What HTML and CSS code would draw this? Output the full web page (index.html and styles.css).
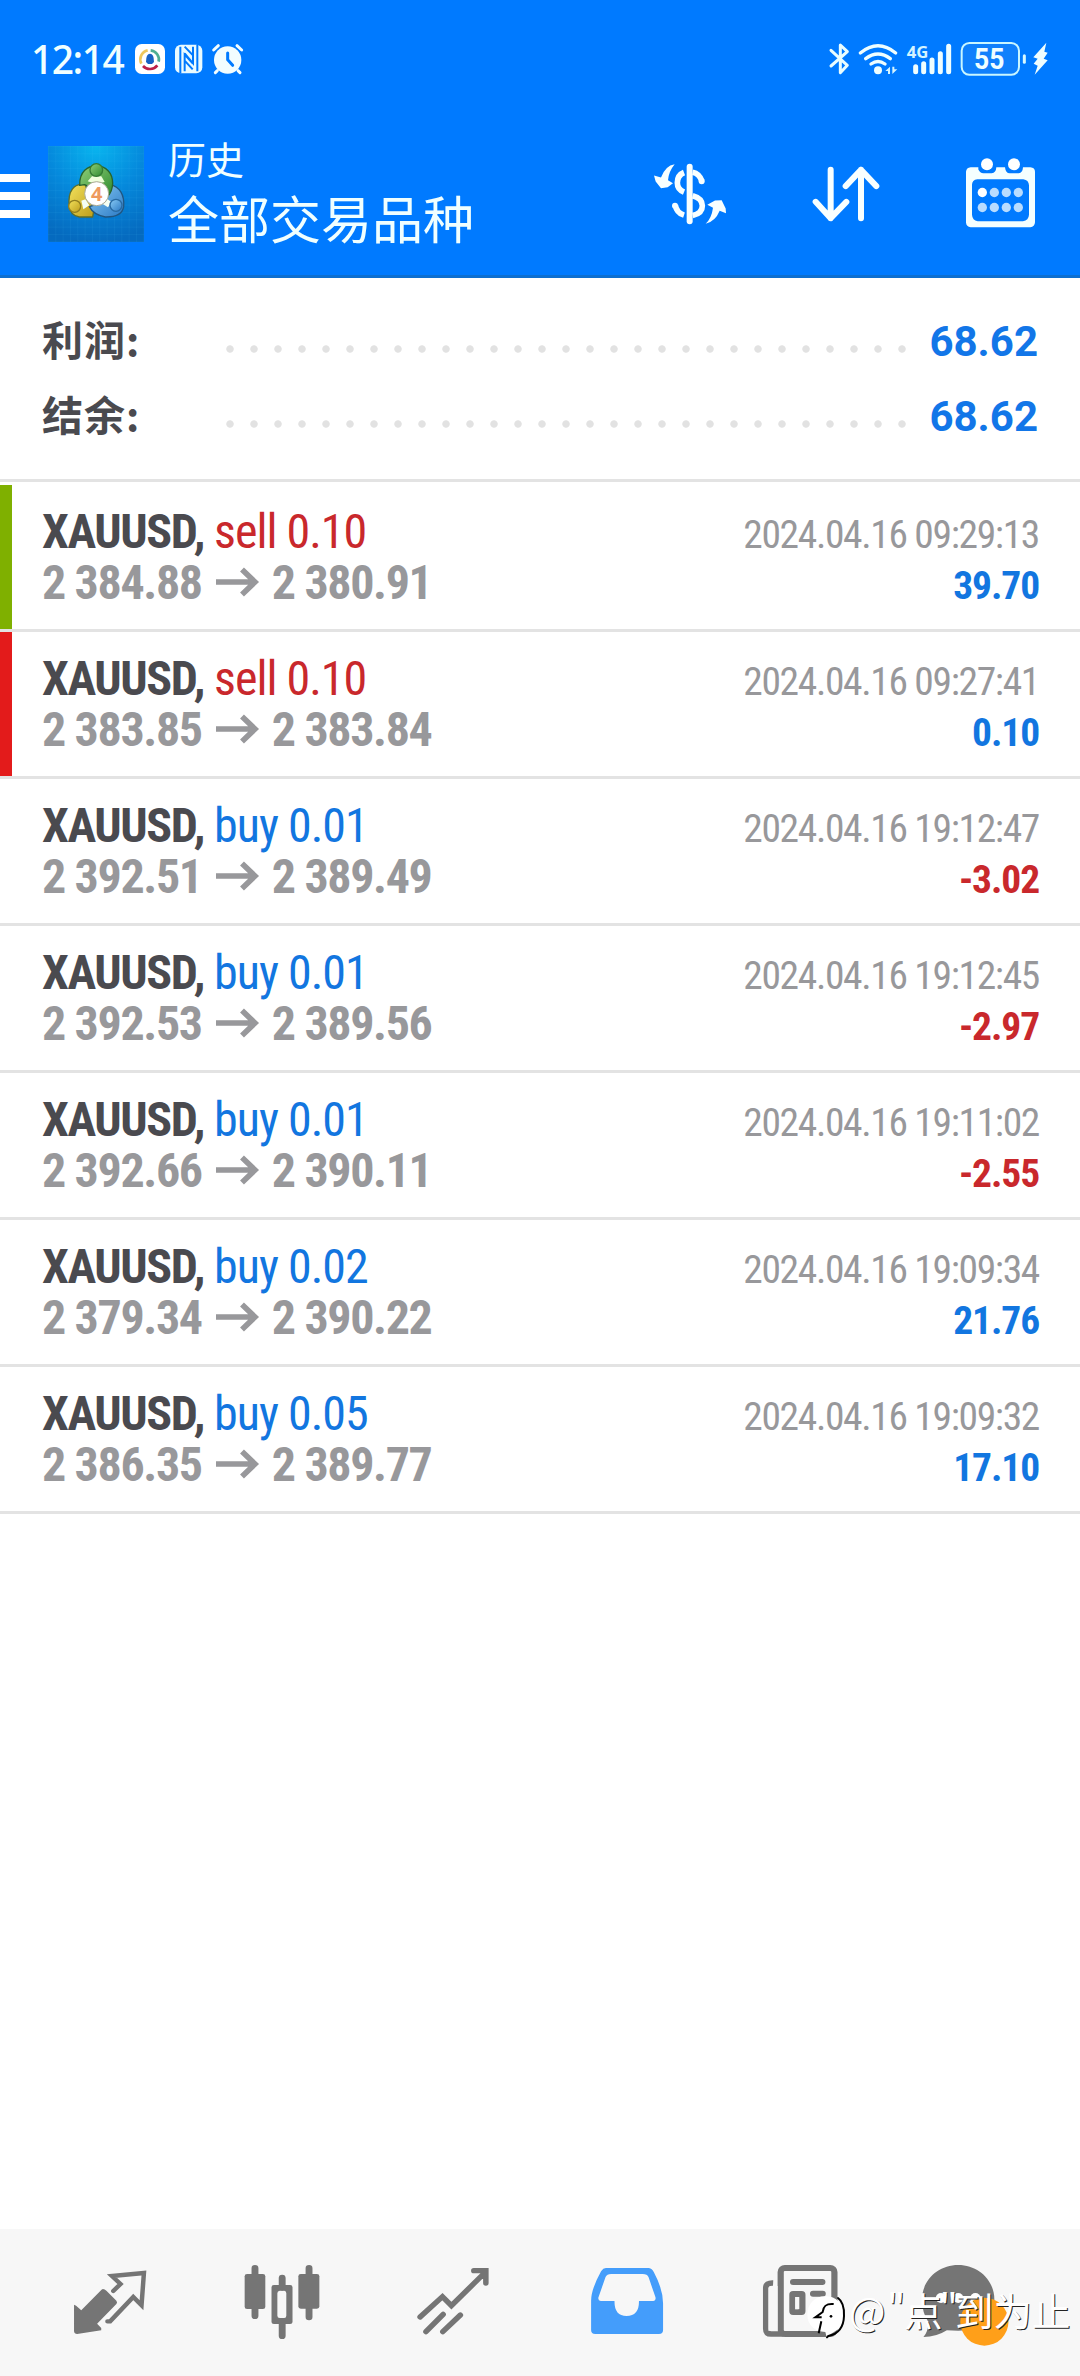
FILE: index.html
```html
<!DOCTYPE html>
<html lang="zh-CN">
<head>
<meta charset="utf-8">
<title>历史</title>
<link rel="stylesheet" href="styles.css">
</head>
<body>
<div class="screen">
  <header class="header">
    <div class="status">
      <div class="status-left">
        <span class="clock">12:14</span>
        <svg class="status-icons-left" viewBox="396 60 339 120">
          <rect x="405" y="72" width="90" height="90" rx="20" fill="#fff"/>
          <g fill="none" stroke-width="8">
            <path d="M424 131A28 28 0 0 1 443 91" stroke="#efc75b"/>
            <path d="M452 91A28 28 0 0 1 476 125" stroke="#4fae92"/>
            <path d="M429 138A28 28 0 0 0 472 136" stroke="#bd2048"/>
          </g>
          <path d="M438 126Q438 101 450 101T462 126L456 132H444Z" fill="#1761c4"/>
          <rect x="525" y="74" width="82" height="86" rx="18" fill="#e9fbff"/>
          <g fill="none" stroke="#007aff" stroke-width="6">
            <path d="M541 80V160M592 74V154M554 154V104L578 130M579 80V130L554 100M554 122L578 148M554 80L579 106"/>
          </g>
          <circle cx="683" cy="120" r="41" fill="#f2fdff"/>
          <path d="M652 152L646 158M714 152L720 158M641 90L655 77M711 77L725 90" stroke="#f2fdff" stroke-width="9" stroke-linecap="round"/>
          <path d="M683 99V119L698 136" fill="none" stroke="#007aff" stroke-width="9" stroke-linecap="round"/>
        </svg>
      </div>
      <svg class="status-icons-right" viewBox="84 60 666 120">
        <path d="M93 91L142 136L121 158V75L142 95L93 138" fill="none" stroke="#e9fdff" stroke-width="9" stroke-linecap="round" stroke-linejoin="round"/>
        <g fill="none" stroke="#effeff" stroke-width="10" stroke-linecap="round">
          <path d="M181 99Q234 56 287 99M197 116Q234 88 271 116M213 132Q234 117 255 132"/>
        </g>
        <circle cx="234" cy="151" r="12" fill="#effeff"/>
        <path d="M256 153L270 140V162H264V153ZM292 148L277 162V140H283V148Z" fill="#d4f4ff"/>
        <text x="320" y="115" class="net" textLength="65" lengthAdjust="spacingAndGlyphs">4G</text>
        <path d="M347 140V155M371 131V155M396 120V155M421 101V155M446 79V155" stroke="#effeff" stroke-width="15" stroke-linecap="round"/>
        <rect x="485" y="69" width="172" height="95" rx="23" fill="#0f80fc" stroke="#c9f6ff" stroke-width="6"/>
        <text x="522" y="147" class="battery" textLength="91" lengthAdjust="spacingAndGlyphs">55</text>
        <path d="M673 107V127" stroke="#d9faff" stroke-width="9" stroke-linecap="round"/>
        <path d="M739 68L700 112L713 116L701 131L713 137L704 164L743 121L731 116L743 98L733 95Z" fill="#effeff"/>
      </svg>
    </div>
    <div class="appbar">
      <div class="menu"><i></i><i></i><i></i></div>
      <svg class="logo" viewBox="0 0 288 288">
        <defs>
          <radialGradient id="sky" cx=".5" cy="0" r="1"><stop offset="0" stop-color="#08b5ef"/><stop offset=".5" stop-color="#0589dc"/><stop offset="1" stop-color="#056abf"/></radialGradient>
          <linearGradient id="green" x2="1" y2="1"><stop stop-color="#8fcf78"/><stop offset="1" stop-color="#2e8a2e"/></linearGradient>
          <linearGradient id="gold" x2="1" y2="1"><stop stop-color="#f3e25c"/><stop offset="1" stop-color="#bd9d1c"/></linearGradient>
          <linearGradient id="blue" x2="1" y2="1"><stop stop-color="#8acbf5"/><stop offset="1" stop-color="#2a79c4"/></linearGradient>
          <pattern id="grid" width="22" height="22" patternUnits="userSpaceOnUse"><path d="M0 0H22M0 0V22" stroke="#5fd0ff" stroke-opacity=".18" stroke-width="2"/></pattern>
        </defs>
        <rect width="288" height="288" fill="url(#sky)"/>
        <rect width="288" height="288" fill="url(#grid)"/>
        <g stroke-width="4" stroke-linejoin="round">
          <path d="M64 180C58 136 78 110 112 116L138 190L134 213H94Q66 208 64 180Z" fill="url(#gold)" stroke="#5c6e2c"/>
          <path d="M186 116C216 122 230 148 227 182Q222 214 172 213Q136 206 124 182L176 166Z" fill="url(#blue)" stroke="#215681"/>
          <path d="M95 118C94 75 120 60 145 60C174 60 194 80 194 112Q193 136 180 150L110 116Z" fill="url(#green)" stroke="#28642d"/>
          <path d="M119 106L132 91H160L170 108L145 114Z" fill="#efffdc" stroke="none"/>
          <path d="M100 164L112 160L124 178L106 190ZM174 156L190 168L180 184L164 174Z" fill="#f5fff4" stroke="none"/>
          <circle cx="145" cy="72" r="19" fill="url(#green)" stroke="#357b34"/>
          <circle cx="80" cy="181" r="18" fill="url(#gold)" stroke="#8f7d20"/>
          <circle cx="204" cy="178" r="18" fill="url(#blue)" stroke="#286aa2"/>
        </g>
        <circle cx="146" cy="143" r="36" fill="#fff" stroke="#a9a993" stroke-width="3"/>
        <text x="146" y="165" class="logo-num" text-anchor="middle">4</text>
      </svg>
      <div class="titles">
        <div class="title-small">历史</div>
        <div class="title-main">全部交易品种</div>
      </div>
      <div class="actions">
        <svg viewBox="90 75 228 230">
          <path d="M209 110V273" stroke="#f8ffff" stroke-width="18" stroke-linecap="round"/>
          <path d="M192 127Q172 135 172 158Q172 178 192 186M218 126Q238 130 246 153M166 225Q170 248 192 255M218 197Q247 205 247 227Q247 250 218 256" fill="none" stroke="#f8ffff" stroke-width="17"/>
          <circle cx="245" cy="153" r="9" fill="#f8ffff"/><circle cx="165" cy="227" r="9" fill="#f8ffff"/>
          <path d="M164 102Q136 106 123 142L102 136L107 154L123 174L143 171L159 159L144 150Q146 124 164 102ZM257 281Q286 274 299 242L318 249L317 235L305 210L285 211L262 224L279 233Q275 264 257 281Z" fill="#f8ffff"/>
        </svg>
        <svg viewBox="558 75 228 230">
          <path d="M632 119V264M587 215L632 264L679 215M723 264V119M677 168L723 119L769 168" fill="none" stroke="#f8ffff" stroke-width="18" stroke-linecap="round" stroke-linejoin="round"/>
        </svg>
        <svg viewBox="1026 75 228 230">
          <path d="M1052 111H1075V118Q1080 129 1090 129H1115Q1128 128 1129 111H1155Q1157 129 1169 129H1196Q1208 128 1209 111H1231Q1245 112 1245 125V276Q1244 290 1231 291H1052Q1039 290 1038 277V125Q1039 112 1052 111ZM1072 147Q1056 149 1056 164V254Q1057 271 1073 273H1209Q1226 271 1227 254V165Q1226 149 1210 147Z" fill="#f4ffff" fill-rule="evenodd"/>
          <circle cx="1101" cy="102" r="18" fill="#fff"/><circle cx="1182" cy="102" r="18" fill="#fff"/>
          <circle cx="1087" cy="187" r="14" fill="#fff"/>
          <g fill="#b8dcff"><circle cx="1123" cy="187" r="14"/><circle cx="1159" cy="187" r="14"/><circle cx="1195" cy="187" r="14"/><circle cx="1087" cy="232" r="14"/><circle cx="1123" cy="232" r="14"/><circle cx="1159" cy="232" r="14"/><circle cx="1195" cy="232" r="14"/></g>
        </svg>
      </div>
    </div>
  </header>

  <section class="summary">
    <div class="sum-row"><span class="sum-label">利润:</span><span class="dots"></span><span class="sum-value">68.62</span></div>
    <div class="sum-row"><span class="sum-label">结余:</span><span class="dots"></span><span class="sum-value">68.62</span></div>
  </section>

  <main class="deals" id="deals"></main>

  <nav class="nav">
    <svg viewBox="69.7 87 501 441" preserveAspectRatio="none">
      <path d="M299 267Q304 267 309 272L338 302Q342 307 338 312L282 371L294 384V391L224 402Q216 402 215 394V314L221 317L236 331L292 272Q296 267 299 267Z" fill="#757575"/>
      <path d="M329 273L350 252L325 228L418 219L411 316L387 291L320 364H312" fill="none" stroke="#757575" stroke-width="13" stroke-linecap="round" stroke-linejoin="miter"/>
    </svg>
    <svg viewBox="570.6 87 501 441" preserveAspectRatio="none">
      <path d="M739 205V347M896 205V351M818 234V262M818 366V407" stroke="#757575" stroke-width="20" stroke-linecap="round"/>
      <rect x="709" y="222" width="60" height="105" rx="7" fill="#757575"/>
      <rect x="865" y="222" width="61" height="104" rx="7" fill="#757575"/>
      <path d="M794 255H841Q848 255 848 262V366Q848 372 841 372H794Q787 372 787 366V262Q787 255 794 255ZM811 272Q804 273 804 280V347Q804 354 811 354H824Q830 354 830 347V280Q830 273 824 272Z" fill="#757575" fill-rule="evenodd"/>
    </svg>
    <svg viewBox="1071.6 87 501 441" preserveAspectRatio="none">
      <path d="M1220 351L1285 290L1311 317L1410 216M1376 212H1411V249M1237 395L1287 343M1286 395L1337 345" fill="none" stroke="#757575" stroke-width="16" stroke-linecap="round" stroke-linejoin="miter"/>
    </svg>
    <svg viewBox="4.4 87 501 441" preserveAspectRatio="none">
      <path d="M190 204H313Q323 204 329 216Q356 268 356 310V390Q356 402 344 402H159Q147 402 147 390V302Q147 268 176 214Q182 204 190 204ZM205 222Q193 222 189 231L168 293Q167 302 175 303H215Q214 348 250 348Q287 348 286 303H328Q336 302 334 292L314 232Q310 222 297 222Z" fill="#449dfb" fill-rule="evenodd"/>
    </svg>
    <svg viewBox="505.3 87 501 441" preserveAspectRatio="none">
      <rect x="699" y="204" width="156" height="198" rx="12" fill="#f7f7f7" stroke="#757575" stroke-width="18"/>
      <path d="M677 249Q656 248 656 264V386Q656 402 671 402H708" fill="none" stroke="#757575" stroke-width="17"/>
      <path d="M663 263V392H690V258H668Z" fill="#f7f7f7"/>
      <path d="M735 246H820M793 281H821" stroke="#757575" stroke-width="18" stroke-linecap="round"/>
      <rect x="733" y="282" width="29" height="54" rx="2" fill="#f7f7f7" stroke="#757575" stroke-width="18"/>
      <rect x="741" y="291" width="10" height="37" fill="#f7f7f7"/>
    </svg>
    <svg viewBox="1006.2 87 501 441" preserveAspectRatio="none">
      <path d="M1213 195C1272 195 1318 241 1318 298C1318 355 1270 392 1213 392L1180 391Q1150 411 1112 411Q1126 395 1126 365Q1108 339 1108 298C1108 241 1154 195 1213 195Z" fill="#757575"/>
      <circle cx="1163" cy="294" r="15" fill="#fff"/><circle cx="1213" cy="294" r="15" fill="#fff"/><circle cx="1263" cy="294" r="15" fill="#fff"/>
      <ellipse cx="1289" cy="365" rx="70" ry="72" fill="#ff9f19"/>
    </svg>
  </nav>

  <div class="watermark">
    <svg viewBox="0 0 180 192">
      <path d="M88 37C122 37 142 60 142 92C142 128 122 140 104 150L92 160L88 144C56 142 34 122 34 92C34 60 56 37 88 37Z" fill="#fff"/>
      <path d="M126 42C140 52 145 72 144 96C143 130 126 150 97 156L93 160" fill="none" stroke="#000" stroke-width="6" stroke-linecap="round"/>
      <path d="M113 60C90 58 82 66 80 84L58 100H77M76 112L68 148" fill="none" stroke="#000" stroke-width="6"/>
      <circle cx="105" cy="97" r="4"/>
    </svg>
    <div class="wm-text"><span class="wm-at">@</span><span class="wm-open">"</span><span class="wm-word">点</span><span class="wm-close">"</span><span class="wm-word">到为止</span></div>
  </div>
</div>
<script src="deals.js"></script>
</body>
</html>
```
FILE: styles.css
```css
* { box-sizing: border-box; }
body { margin: 0; background: #fff; }
.screen {
  position: relative;
  width: 1080px;
  height: 2376px;
  display: flex;
  flex-direction: column;
  font-family: Roboto, "Noto Sans CJK SC", sans-serif;
  overflow: hidden;
}
svg { display: block; flex: none; overflow: visible; }

.header { height: 278px; background: #007aff; border-bottom: 3px solid #0d6fd0; color: #f0ffff; }
.status { height: 100px; padding: 20px 30px 0 31px; display: flex; justify-content: space-between; }
.status-left { display: flex; }
.clock { width: 101px; font: 500 39px/78px "Noto Sans", sans-serif; letter-spacing: -1.5px; white-space: nowrap; }
.status-icons-left { width: 113px; height: 40px; margin-top: 20px; }
.status-icons-right { width: 222px; height: 40px; margin-top: 20px; }
.net { font: 700 46px "Noto Sans", sans-serif; fill: #d4f4ff; }
.battery { font: 700 86px Roboto, sans-serif; fill: #effeff; }

.appbar { height: 175px; padding-top: 38px; display: flex; align-items: flex-start; }
.menu { width: 30px; height: 44px; margin-top: 36px; display: flex; flex-direction: column; justify-content: space-between; }
.menu i { height: 8px; background: #fff; }
.logo { width: 96px; height: 96px; margin: 8px 0 0 18px; overflow: hidden; }
.logo-num { font: 700 60px "Noto Sans", sans-serif; fill: #ee9a5e; }
.titles { margin-left: 24px; flex: 1; white-space: nowrap; }
.title-small { font-size: 38px; line-height: 46px; }
.title-main { font-size: 51px; line-height: 62px; margin-top: 7px; }
.actions { display: flex; gap: 80px; margin: 17px 42px 0 0; }
.actions svg { width: 76px; height: 77px; }

.summary { height: 204px; padding: 26px 42px 0; border-bottom: 3px solid #e3e3e3; }
.sum-row { height: 75px; display: flex; align-items: center; font-weight: 700; }
.sum-label { width: 176px; margin-top: -7px; font: 700 41px/60px "Noto Sans CJK SC", sans-serif; letter-spacing: 1px; color: #4a4a4f; }
.dots {
  width: 696px;
  height: 24px;
  margin-top: 15px;
  background: radial-gradient(circle, #e2e2e2 3.3px, transparent 4.1px) 0 0 / 24px 24px;
}
.sum-value { flex: 1; text-align: right; font-size: 42px; color: #1276e8; }

.deals { margin-top: 3px; flex: 1; }
.deal {
  height: 147px;
  padding: 21px 42px 0;
  border-bottom: 3px solid #e3e3e3;
  font-family: "Roboto Condensed", Roboto, sans-serif;
  font-stretch: 75%;
  background: linear-gradient(var(--mark, transparent), var(--mark, transparent)) 0 0 / 12px 100% no-repeat;
}
.marked-tp { --mark: #7fb000; }
.marked-sl { --mark: #e31b1b; }
.line { height: 51px; line-height: 51px; display: flex; justify-content: space-between; align-items: baseline; white-space: pre; }
.main { font-size: 48px; letter-spacing: -1px; }
.symbol { font-weight: 700; color: #4a4a4f; letter-spacing: -1.4px; }
.prices { font-weight: 700; color: #98989b; letter-spacing: -1.35px; }
.arrow { display: inline-block; width: 43px; height: 30px; margin: 0 13px 0 14px; vertical-align: 2px; }
.time { font-size: 39.5px; color: #98989b; letter-spacing: -1.35px; margin-right: -1px; }
.profit { font-size: 39.5px; font-weight: 700; letter-spacing: -1.1px; margin-right: -1px; }
.up { color: #1276e0; }
.down { color: #c9282c; }

.nav { height: 147px; padding: 0 21px 0 24px; display: flex; background: #f7f7f7; }
.nav svg { width: 172.5px; height: 147px; }

.watermark { position: absolute; left: 796px; top: 2284px; display: flex; }
.watermark svg { width: 60px; height: 64px; }
.wm-text {
  display: flex;
  margin: 1px 0 0 -7px;
  font: 400 38.5px/48px "Noto Sans CJK SC", sans-serif;
  color: #fff;
  text-shadow: 1px 1px 0 #222;
  white-space: nowrap;
}
.wm-at { width: 38px; }
.wm-open { width: 17px; }
.wm-word { flex: none; }
.wm-close { width: 12.5px; margin-left: -3px; margin-right: 3px; }
```
FILE: deals.js
```js
const deals = [
  ["sell 0.10", "2 384.88", "2 380.91", "2024.04.16 09:29:13", "39.70", "marked-tp"],
  ["sell 0.10", "2 383.85", "2 383.84", "2024.04.16 09:27:41", "0.10", "marked-sl"],
  ["buy 0.01", "2 392.51", "2 389.49", "2024.04.16 19:12:47", "-3.02", ""],
  ["buy 0.01", "2 392.53", "2 389.56", "2024.04.16 19:12:45", "-2.97", ""],
  ["buy 0.01", "2 392.66", "2 390.11", "2024.04.16 19:11:02", "-2.55", ""],
  ["buy 0.02", "2 379.34", "2 390.22", "2024.04.16 19:09:34", "21.76", ""],
  ["buy 0.05", "2 386.35", "2 389.77", "2024.04.16 19:09:32", "17.10", ""]
];
const arrow = '<svg class="arrow" viewBox="0 0 43 30"><path d="M0 15H39M26 2.5L39 15L26 27.5" fill="none" stroke="#98989b" stroke-width="5.6"/></svg>';
document.getElementById("deals").innerHTML = deals.map(([op, from, to, time, profit, mark]) => `
  <article class="deal ${mark}">
    <div class="line"><span class="main"><span class="symbol">XAUUSD,</span> <span class="${op.startsWith("buy") ? "up" : "down"}">${op}</span></span><span class="time">${time}</span></div>
    <div class="line"><span class="main prices">${from}${arrow}${to}</span><span class="profit ${profit.startsWith("-") ? "down" : "up"}">${profit}</span></div>
  </article>`).join("");
```
